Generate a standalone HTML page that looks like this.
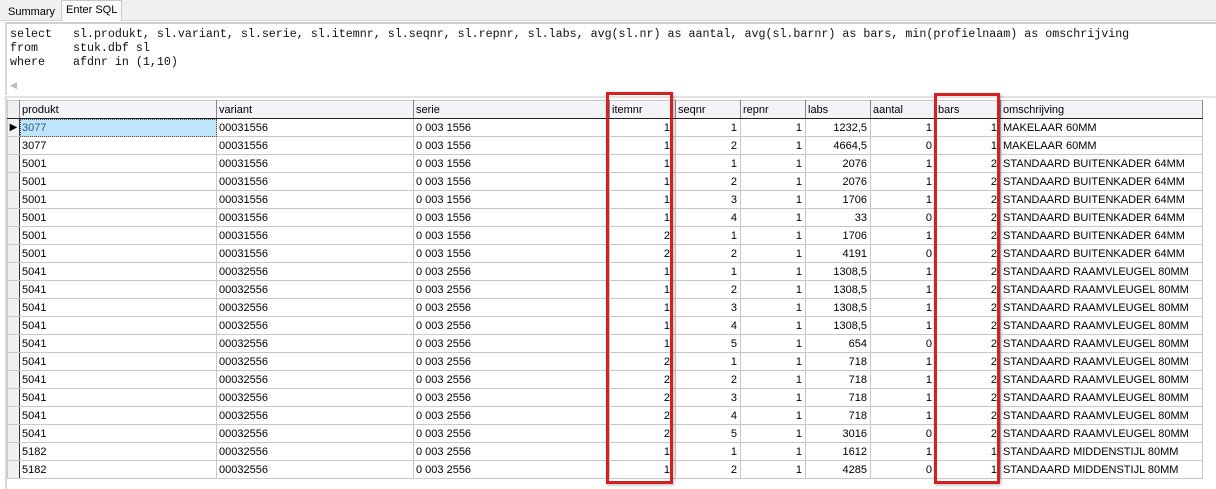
<!DOCTYPE html>
<html><head><meta charset="utf-8"><style>
*{margin:0;padding:0;box-sizing:border-box}
body{width:1216px;height:489px;background:#fff;position:relative;overflow:hidden;font-family:"Liberation Sans",Tahoma,sans-serif;font-size:11px;color:#000}
.tabs{position:absolute;left:0;top:0;width:1216px;height:21px;background:#f0f0f0;border-bottom:1px solid #d6d6d6}
.tab{position:absolute;top:3px;height:18px;line-height:16px;padding:0 4px;font-size:11px}
.t1{left:4px;top:4px}
.t2{left:61px;top:0;height:21px;background:#fafafa;border:1px solid #c8c8c8;border-bottom:none;padding-top:1px}
.sql{position:absolute;left:5px;top:22px;width:1211px;height:73px;border-top:2px solid #d0d0d0;border-left:2px solid #d8d8d8;background:#fff;font-family:"Liberation Mono",monospace;font-size:11.67px;line-height:14px;padding:3px 0 0 3px;white-space:pre;color:#111}
.arr{position:absolute;left:10px;top:80px;color:#bbb;font-size:9px}
.gridwrap{position:absolute;left:5px;top:96px;width:1211px;height:393px;border-left:2px solid #d8d8d8;border-top:2px solid #e3e3e3}
table{position:absolute;left:7px;top:100px;border-collapse:collapse;table-layout:fixed}
td,th{height:18px;border:1px solid #c8c8c8;padding:0 2px;font-weight:normal;white-space:nowrap;overflow:hidden;font-size:11px}
th{background:#f4f4f8;text-align:left;border-bottom:1px solid #222;border-right:1px solid #888}
td.ind{background:#f0f0f0;border-right:1px solid #333;padding:0}
td.r{text-align:right;padding-right:3px}
td.sel{background:#bfe5fa;color:#2a5a8a;outline:1px dotted #555;outline-offset:-1px}
tr td:nth-child(5){padding-right:5px}
.red{position:absolute;border:3px solid #d42020;box-shadow:1px 1px 3px rgba(0,0,0,.3)}
</style></head><body>
<div class="tabs"><div class="tab t1">Summary</div><div class="tab t2">Enter SQL</div></div>
<div class="sql">select   sl.produkt, sl.variant, sl.serie, sl.itemnr, sl.seqnr, sl.repnr, sl.labs, avg(sl.nr) as aantal, avg(sl.barnr) as bars, min(profielnaam) as omschrijving
from     stuk.dbf sl
where    afdnr in (1,10)</div>
<div class="arr">◀</div>
<div class="gridwrap"></div>
<table>
<colgroup><col style="width:12px"><col style="width:197px"><col style="width:197px"><col style="width:196px"><col style="width:66px"><col style="width:65px"><col style="width:65px"><col style="width:65px"><col style="width:65px"><col style="width:65px"><col style="width:202px"></colgroup>
<tr><th style="padding:0;background:#f0f0f0"></th><th>produkt</th><th>variant</th><th>serie</th><th>itemnr</th><th>seqnr</th><th>repnr</th><th>labs</th><th>aantal</th><th>bars</th><th>omschrijving</th></tr>
<tr><td class="ind" style="font-size:10px;text-align:center">▶</td><td class="sel">3077</td><td>00031556</td><td>0 003 1556</td><td class="r">1</td><td class="r">1</td><td class="r">1</td><td class="r">1232,5</td><td class="r">1</td><td class="r">1</td><td>MAKELAAR 60MM</td></tr>
<tr><td class="ind"></td><td>3077</td><td>00031556</td><td>0 003 1556</td><td class="r">1</td><td class="r">2</td><td class="r">1</td><td class="r">4664,5</td><td class="r">0</td><td class="r">1</td><td>MAKELAAR 60MM</td></tr>
<tr><td class="ind"></td><td>5001</td><td>00031556</td><td>0 003 1556</td><td class="r">1</td><td class="r">1</td><td class="r">1</td><td class="r">2076</td><td class="r">1</td><td class="r">2</td><td>STANDAARD BUITENKADER 64MM</td></tr>
<tr><td class="ind"></td><td>5001</td><td>00031556</td><td>0 003 1556</td><td class="r">1</td><td class="r">2</td><td class="r">1</td><td class="r">2076</td><td class="r">1</td><td class="r">2</td><td>STANDAARD BUITENKADER 64MM</td></tr>
<tr><td class="ind"></td><td>5001</td><td>00031556</td><td>0 003 1556</td><td class="r">1</td><td class="r">3</td><td class="r">1</td><td class="r">1706</td><td class="r">1</td><td class="r">2</td><td>STANDAARD BUITENKADER 64MM</td></tr>
<tr><td class="ind"></td><td>5001</td><td>00031556</td><td>0 003 1556</td><td class="r">1</td><td class="r">4</td><td class="r">1</td><td class="r">33</td><td class="r">0</td><td class="r">2</td><td>STANDAARD BUITENKADER 64MM</td></tr>
<tr><td class="ind"></td><td>5001</td><td>00031556</td><td>0 003 1556</td><td class="r">2</td><td class="r">1</td><td class="r">1</td><td class="r">1706</td><td class="r">1</td><td class="r">2</td><td>STANDAARD BUITENKADER 64MM</td></tr>
<tr><td class="ind"></td><td>5001</td><td>00031556</td><td>0 003 1556</td><td class="r">2</td><td class="r">2</td><td class="r">1</td><td class="r">4191</td><td class="r">0</td><td class="r">2</td><td>STANDAARD BUITENKADER 64MM</td></tr>
<tr><td class="ind"></td><td>5041</td><td>00032556</td><td>0 003 2556</td><td class="r">1</td><td class="r">1</td><td class="r">1</td><td class="r">1308,5</td><td class="r">1</td><td class="r">2</td><td>STANDAARD RAAMVLEUGEL 80MM</td></tr>
<tr><td class="ind"></td><td>5041</td><td>00032556</td><td>0 003 2556</td><td class="r">1</td><td class="r">2</td><td class="r">1</td><td class="r">1308,5</td><td class="r">1</td><td class="r">2</td><td>STANDAARD RAAMVLEUGEL 80MM</td></tr>
<tr><td class="ind"></td><td>5041</td><td>00032556</td><td>0 003 2556</td><td class="r">1</td><td class="r">3</td><td class="r">1</td><td class="r">1308,5</td><td class="r">1</td><td class="r">2</td><td>STANDAARD RAAMVLEUGEL 80MM</td></tr>
<tr><td class="ind"></td><td>5041</td><td>00032556</td><td>0 003 2556</td><td class="r">1</td><td class="r">4</td><td class="r">1</td><td class="r">1308,5</td><td class="r">1</td><td class="r">2</td><td>STANDAARD RAAMVLEUGEL 80MM</td></tr>
<tr><td class="ind"></td><td>5041</td><td>00032556</td><td>0 003 2556</td><td class="r">1</td><td class="r">5</td><td class="r">1</td><td class="r">654</td><td class="r">0</td><td class="r">2</td><td>STANDAARD RAAMVLEUGEL 80MM</td></tr>
<tr><td class="ind"></td><td>5041</td><td>00032556</td><td>0 003 2556</td><td class="r">2</td><td class="r">1</td><td class="r">1</td><td class="r">718</td><td class="r">1</td><td class="r">2</td><td>STANDAARD RAAMVLEUGEL 80MM</td></tr>
<tr><td class="ind"></td><td>5041</td><td>00032556</td><td>0 003 2556</td><td class="r">2</td><td class="r">2</td><td class="r">1</td><td class="r">718</td><td class="r">1</td><td class="r">2</td><td>STANDAARD RAAMVLEUGEL 80MM</td></tr>
<tr><td class="ind"></td><td>5041</td><td>00032556</td><td>0 003 2556</td><td class="r">2</td><td class="r">3</td><td class="r">1</td><td class="r">718</td><td class="r">1</td><td class="r">2</td><td>STANDAARD RAAMVLEUGEL 80MM</td></tr>
<tr><td class="ind"></td><td>5041</td><td>00032556</td><td>0 003 2556</td><td class="r">2</td><td class="r">4</td><td class="r">1</td><td class="r">718</td><td class="r">1</td><td class="r">2</td><td>STANDAARD RAAMVLEUGEL 80MM</td></tr>
<tr><td class="ind"></td><td>5041</td><td>00032556</td><td>0 003 2556</td><td class="r">2</td><td class="r">5</td><td class="r">1</td><td class="r">3016</td><td class="r">0</td><td class="r">2</td><td>STANDAARD RAAMVLEUGEL 80MM</td></tr>
<tr><td class="ind"></td><td>5182</td><td>00032556</td><td>0 003 2556</td><td class="r">1</td><td class="r">1</td><td class="r">1</td><td class="r">1612</td><td class="r">1</td><td class="r">1</td><td>STANDAARD MIDDENSTIJL 80MM</td></tr>
<tr><td class="ind"></td><td>5182</td><td>00032556</td><td>0 003 2556</td><td class="r">1</td><td class="r">2</td><td class="r">1</td><td class="r">4285</td><td class="r">0</td><td class="r">1</td><td>STANDAARD MIDDENSTIJL 80MM</td></tr>
</table>
<div class="red" style="left:606px;top:92px;width:67px;height:392px"></div>
<div class="red" style="left:934px;top:93px;width:66px;height:391px"></div>
</body></html>
